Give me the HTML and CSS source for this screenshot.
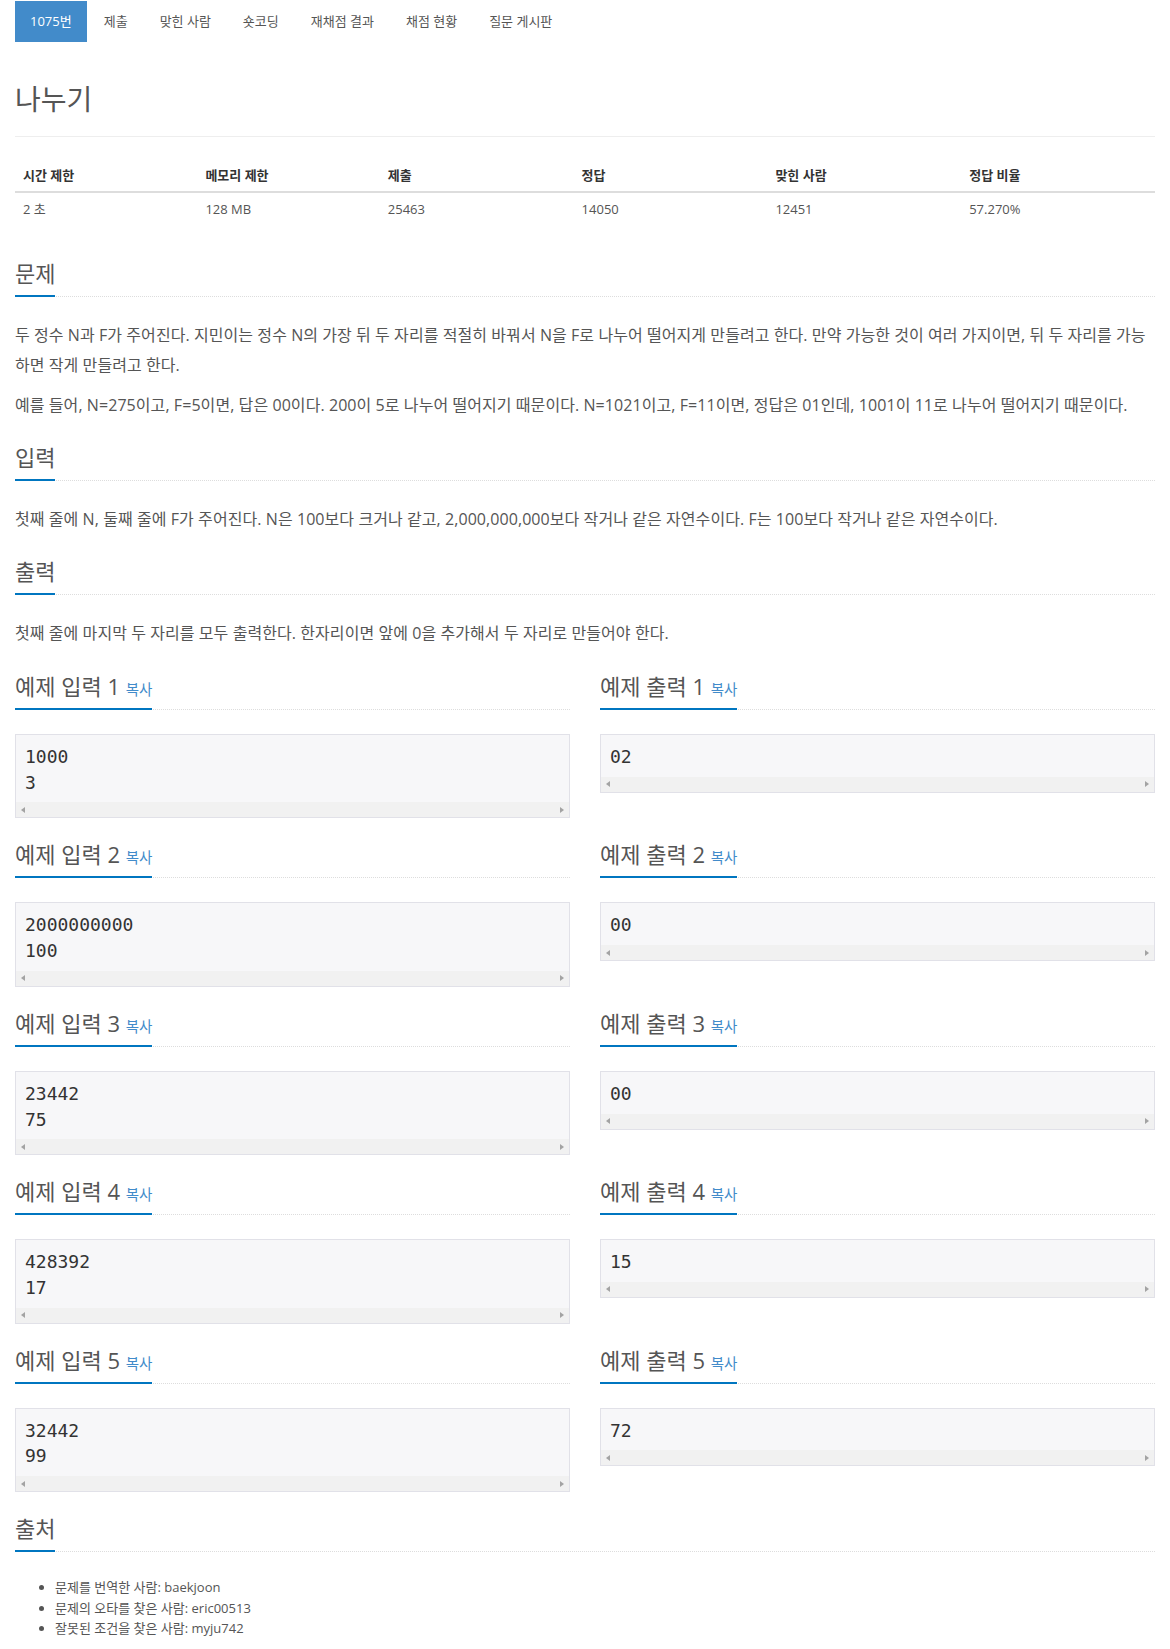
FILE: index.html
```html
<!DOCTYPE html>
<html lang="ko">
<head>
<meta charset="utf-8">
<title>나누기</title>
<link rel="stylesheet" href="styles.css">
</head>
<body>
<div class="container">
  <ul class="nav">
    <li class="nav-item active">1075번</li>
    <li class="nav-item">제출</li>
    <li class="nav-item">맞힌 사람</li>
    <li class="nav-item">숏코딩</li>
    <li class="nav-item">재채점 결과</li>
    <li class="nav-item">채점 현황</li>
    <li class="nav-item">질문 게시판</li>
  </ul>

  <div class="page-header"><h1 class="title">나누기</h1></div>

  <table class="info">
    <thead>
      <tr><th>시간 제한</th><th>메모리 제한</th><th>제출</th><th>정답</th><th>맞힌 사람</th><th>정답 비율</th></tr>
    </thead>
    <tbody>
      <tr><td>2 초</td><td>128 MB</td><td>25463</td><td>14050</td><td>12451</td><td>57.270%</td></tr>
    </tbody>
  </table>

  <section class="sec first">
    <div class="headline"><h2>문제</h2></div>
    <div class="problem-text">
      <p>두 정수 N과 F가 주어진다. 지민이는 정수 N의 가장 뒤 두 자리를 적절히 바꿔서 N을 F로 나누어 떨어지게 만들려고 한다. 만약 가능한 것이 여러 가지이면, 뒤 두 자리를 가능하면 작게 만들려고 한다.</p>
      <p>예를 들어, N=275이고, F=5이면, 답은 00이다. 200이 5로 나누어 떨어지기 때문이다. N=1021이고, F=11이면, 정답은 01인데, 1001이 11로 나누어 떨어지기 때문이다.</p>
    </div>
  </section>

  <section class="sec">
    <div class="headline"><h2>입력</h2></div>
    <div class="problem-text">
      <p>첫째 줄에 N, 둘째 줄에 F가 주어진다. N은 100보다 크거나 같고, 2,000,000,000보다 작거나 같은 자연수이다. F는 100보다 작거나 같은 자연수이다.</p>
    </div>
  </section>

  <section class="sec">
    <div class="headline"><h2>출력</h2></div>
    <div class="problem-text">
      <p>첫째 줄에 마지막 두 자리를 모두 출력한다. 한자리이면 앞에 0을 추가해서 두 자리로 만들어야 한다.</p>
    </div>
  </section>

  <div class="samples">
    <div class="sample">
      <div class="headline"><h2>예제 입력 1 <span class="copy">복사</span></h2></div>
      <div class="box"><pre>1000
3</pre><div class="sbar"><span class="arr-l"></span><span class="arr-r"></span></div></div>
    </div>
    <div class="sample">
      <div class="headline"><h2>예제 출력 1 <span class="copy">복사</span></h2></div>
      <div class="box"><pre>02</pre><div class="sbar"><span class="arr-l"></span><span class="arr-r"></span></div></div>
    </div>

    <div class="sample">
      <div class="headline"><h2>예제 입력 2 <span class="copy">복사</span></h2></div>
      <div class="box"><pre>2000000000
100</pre><div class="sbar"><span class="arr-l"></span><span class="arr-r"></span></div></div>
    </div>
    <div class="sample">
      <div class="headline"><h2>예제 출력 2 <span class="copy">복사</span></h2></div>
      <div class="box"><pre>00</pre><div class="sbar"><span class="arr-l"></span><span class="arr-r"></span></div></div>
    </div>

    <div class="sample">
      <div class="headline"><h2>예제 입력 3 <span class="copy">복사</span></h2></div>
      <div class="box"><pre>23442
75</pre><div class="sbar"><span class="arr-l"></span><span class="arr-r"></span></div></div>
    </div>
    <div class="sample">
      <div class="headline"><h2>예제 출력 3 <span class="copy">복사</span></h2></div>
      <div class="box"><pre>00</pre><div class="sbar"><span class="arr-l"></span><span class="arr-r"></span></div></div>
    </div>

    <div class="sample">
      <div class="headline"><h2>예제 입력 4 <span class="copy">복사</span></h2></div>
      <div class="box"><pre>428392
17</pre><div class="sbar"><span class="arr-l"></span><span class="arr-r"></span></div></div>
    </div>
    <div class="sample">
      <div class="headline"><h2>예제 출력 4 <span class="copy">복사</span></h2></div>
      <div class="box"><pre>15</pre><div class="sbar"><span class="arr-l"></span><span class="arr-r"></span></div></div>
    </div>

    <div class="sample">
      <div class="headline"><h2>예제 입력 5 <span class="copy">복사</span></h2></div>
      <div class="box"><pre>32442
99</pre><div class="sbar"><span class="arr-l"></span><span class="arr-r"></span></div></div>
    </div>
    <div class="sample">
      <div class="headline"><h2>예제 출력 5 <span class="copy">복사</span></h2></div>
      <div class="box"><pre>72</pre><div class="sbar"><span class="arr-l"></span><span class="arr-r"></span></div></div>
    </div>
  </div>

  <section class="sec source">
    <div class="headline"><h2>출처</h2></div>
    <ul class="credits">
      <li>문제를 번역한 사람: baekjoon</li>
      <li>문제의 오타를 찾은 사람: eric00513</li>
      <li>잘못된 조건을 찾은 사람: myju742</li>
    </ul>
  </section>
</div>
</body>
</html>
```

FILE: styles.css
```css
* { box-sizing: border-box; }

html, body {
  margin: 0;
  padding: 0;
  background: #fff;
}

body {
  font-family: "Open Sans", "Noto Sans CJK KR", sans-serif;
  font-size: 13px;
  color: #555;
}

.container {
  width: 1170px;
  padding: 1px 15px 0 15px;
}

/* nav pills */
.nav {
  list-style: none;
  margin: 0;
  padding: 0;
  display: flex;
  gap: 2px;
}

.nav-item {
  padding: 10px 15px;
  line-height: 21px;
  font-size: 13px;
  color: #555;
}

.nav-item.active {
  background: #428bca;
  color: #fff;
}

/* title */
.page-header {
  margin-top: 42px;
  padding-bottom: 22px;
  border-bottom: 1px solid #eee;
}

.title {
  margin: 0;
  font-size: 28px;
  font-weight: 400;
  line-height: 30px;
  color: #555;
}

/* info table */
.info {
  width: 100%;
  border-collapse: collapse;
  margin-top: 22px;
}

.info th,
.info td {
  text-align: left;
  padding: 7px 8px;
  line-height: 18px;
  font-size: 13px;
}

.info th {
  font-weight: 700;
  color: #333;
  border-bottom: 2px solid #ddd;
}

.info td { color: #555; }

.info th:nth-child(1), .info th:nth-child(2) { width: 16%; }
.info th:nth-child(n+3) { width: 17%; }

/* sections */
.sec { margin-top: 25px; }
.sec.first { margin-top: 36px; }

.headline {
  border-bottom: 1px dotted #ddd;
  margin-bottom: 23px;
}

.headline h2 {
  display: inline-block;
  margin: 0 0 -1px 0;
  padding-bottom: 10px;
  font-size: 22px;
  font-weight: 400;
  line-height: 24px;
  color: #555;
  border-bottom: 2px solid #0076c0;
}

.copy {
  font-size: 14.5px;
  line-height: 0;
  color: #428bca;
}

.problem-text p {
  margin: 0 0 10px 0;
  font-size: 16px;
  line-height: 30px;
  letter-spacing: 0.07px;
  color: #555;
}

/* samples */
.samples {
  margin-top: 26px;
  display: grid;
  grid-template-columns: 1fr 1fr;
  column-gap: 30px;
  row-gap: 24px;
  align-items: start;
}

.sample .headline { margin-bottom: 24px; }

.box {
  border: 1px solid #e1e1e8;
  background: #f7f7f9;
}

.box pre {
  margin: 0;
  padding: 9px 9px 7px 9px;
  font-family: "DejaVu Sans Mono", monospace;
  font-size: 18px;
  line-height: 25.7px;
  color: #333;
}

.sbar {
  height: 15px;
  background: #f1f1f1;
  display: flex;
  justify-content: space-between;
  align-items: center;
  padding: 0 5px;
}

.arr-l {
  width: 0;
  height: 0;
  border-top: 3.5px solid transparent;
  border-bottom: 3.5px solid transparent;
  border-right: 4px solid #a3a3a3;
}

.arr-r {
  width: 0;
  height: 0;
  border-top: 3.5px solid transparent;
  border-bottom: 3.5px solid transparent;
  border-left: 4px solid #a3a3a3;
}

/* source */
.source { margin-top: 24px; }

.credits {
  margin: 0;
  padding: 2px 0 0 40px;
}

.credits li {
  font-size: 13px;
  line-height: 20.5px;
  color: #555;
}
```
